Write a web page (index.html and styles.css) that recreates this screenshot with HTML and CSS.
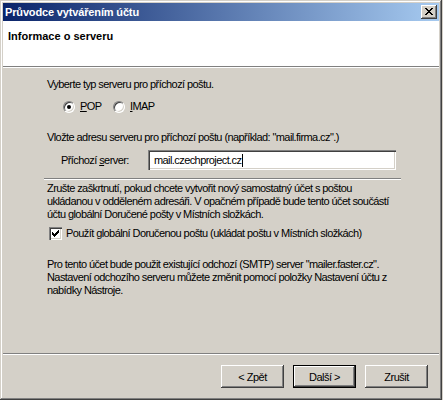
FILE: index.html
```html
<!DOCTYPE html>
<html lang="cs">
<head>
<meta charset="utf-8">
<title>Průvodce vytvářením účtu</title>
<link rel="stylesheet" href="styles.css">
</head>
<body>
<div class="window">
  <div class="titlebar">
    <span class="title">Průvodce vytvářením účtu</span>
    <span class="close">
      <svg width="8" height="7" viewBox="0 0 8 7" shape-rendering="crispEdges">
        <rect x="0" y="0" width="2" height="1"/><rect x="6" y="0" width="2" height="1"/>
        <rect x="1" y="1" width="2" height="1"/><rect x="5" y="1" width="2" height="1"/>
        <rect x="2" y="2" width="4" height="1"/>
        <rect x="3" y="3" width="2" height="1"/>
        <rect x="2" y="4" width="4" height="1"/>
        <rect x="1" y="5" width="2" height="1"/><rect x="5" y="5" width="2" height="1"/>
        <rect x="0" y="6" width="2" height="1"/><rect x="6" y="6" width="2" height="1"/>
      </svg>
    </span>
  </div>
  <div class="header">
    <h1 class="heading">Informace o serveru</h1>
  </div>
  <div class="content">
    <p class="text">Vyberte typ serveru pro příchozí poštu.</p>
    <div class="radios">
      <span class="radio-item pop"><span class="radio checked"></span><span class="text"><u>P</u>OP</span></span>
      <span class="radio-item"><span class="radio"></span><span class="text"><u>I</u>MAP</span></span>
    </div>
    <p class="text gap18">Vložte adresu serveru pro příchozí poštu (například: "mail.firma.cz".)</p>
    <div class="field">
      <span class="field-label text">Příchozí <u>s</u>erver:</span>
      <div class="input text">mail.czechproject.cz<span class="caret"></span></div>
    </div>
    <div class="separator"></div>
    <p class="text para1">Zrušte zaškrtnutí, pokud chcete vytvořit nový samostatný účet s poštou<br>ukládanou v odděleném adresáři. V opačném případě bude tento účet součástí<br>účtu globální Doručené pošty v Místních složkách.</p>
    <div class="check-row">
      <span class="checkbox">
        <svg width="7" height="7" viewBox="0 0 7 7" shape-rendering="crispEdges">
          <rect x="6" y="0" width="1" height="1"/>
          <rect x="5" y="1" width="2" height="1"/>
          <rect x="0" y="2" width="1" height="1"/><rect x="4" y="2" width="3" height="1"/>
          <rect x="0" y="3" width="2" height="1"/><rect x="3" y="3" width="3" height="1"/>
          <rect x="0" y="4" width="5" height="1"/>
          <rect x="1" y="5" width="3" height="1"/>
          <rect x="2" y="6" width="1" height="1"/>
        </svg>
      </span>
      <span class="text">Použít globální Doručenou poštu (ukládat poštu v Místních složkách)</span>
    </div>
    <p class="text gap18">Pro tento účet bude použit existující odchozí (SMTP) server "mailer.faster.cz".<br>Nastavení odchozího serveru můžete změnit pomocí položky Nastavení účtu z<br>nabídky Nástroje.</p>
  </div>
  <div class="footer">
    <button class="btn">&lt; Zpět</button>
    <button class="btn default">Další &gt;</button>
    <button class="btn">Zrušit</button>
  </div>
</div>
</body>
</html>
```
FILE: styles.css
```css
html, body {
  margin: 0;
  padding: 0;
  background: #d4d0c8;
}

body {
  font-family: "Liberation Sans", Arial, sans-serif;
  font-size: 11px;
  color: #000;
}

.window {
  width: 442px;
  height: 400px;
  box-sizing: border-box;
  padding: 3px;
  background: #d4d0c8;
  box-shadow: inset -1px -1px #404040, inset 1px 1px #d4d0c8, inset -2px -2px #808080, inset 2px 2px #ffffff;
  display: flex;
  flex-direction: column;
}

.titlebar {
  height: 18px;
  flex: none;
  background: linear-gradient(to right, #0a246a, #a6caf0);
  display: flex;
  align-items: center;
  justify-content: space-between;
  padding: 0 2px 0 2px;
}

.title {
  color: #fff;
  font-weight: bold;
  line-height: 13px;
  letter-spacing: -0.15px;
}

.close {
  width: 16px;
  height: 14px;
  box-sizing: border-box;
  background: #d4d0c8;
  box-shadow: inset -1px -1px #404040, inset 1px 1px #ffffff, inset -2px -2px #808080;
  display: flex;
  align-items: center;
  justify-content: center;
  padding: 0 1px 1px 0;
}

.close svg { display: block; fill: #000; }

.header {
  height: 45px;
  flex: none;
  background: #fff;
  border-bottom: 1px solid #808080;
}

.heading {
  margin: 0;
  padding: 9px 0 0 5px;
  font-size: 11px;
  font-weight: bold;
  line-height: 13px;
}

.content {
  flex: 1;
  border-top: 1px solid #fff;
  padding: 10px 0 0 44px;
}

.text {
  line-height: 13px;
  letter-spacing: -0.58px;
}

p.text { margin: 0; }

.gap18 { margin-top: 18px !important; }

.radios {
  display: flex;
  align-items: center;
  height: 13px;
  margin: 9px 0 0 16px;
}

.radio-item {
  display: flex;
  align-items: center;
  gap: 5px;
}

.radio-item.pop { width: 50px; }

.radio {
  width: 12px;
  height: 12px;
  box-sizing: border-box;
  border-radius: 50%;
  background: #fff;
  border: 1px solid;
  border-color: #808080 #ffffff #ffffff #808080;
  box-shadow: inset 1px 1px #404040, inset -1px -1px #d4d0c8;
  display: flex;
  align-items: center;
  justify-content: center;
}

.radio.checked::after {
  content: "";
  width: 4px;
  height: 4px;
  border-radius: 50%;
  background: #000;
}

.field {
  display: flex;
  align-items: center;
  margin: 6px 0 0 14px;
}

.field-label { width: 87px; flex: none; }

.input {
  width: 248px;
  height: 20px;
  box-sizing: border-box;
  background: #fff;
  box-shadow: inset 1px 1px #808080, inset 2px 2px #404040, inset -1px -1px #ffffff, inset -2px -2px #d4d0c8;
  padding: 0 0 0 6px;
  display: flex;
  align-items: center;
}

.caret {
  display: inline-block;
  width: 1px;
  height: 13px;
  background: #000;
  margin-left: 1px;
}

.separator {
  width: 357px;
  height: 0;
  margin: 8px 0 0 -3px;
  border-top: 1px solid #808080;
  border-bottom: 1px solid #fff;
}

.para1 { margin-top: 2px !important; }

.check-row {
  display: flex;
  align-items: center;
  gap: 4px;
  margin: 6px 0 0 2px;
  height: 13px;
}

.checkbox {
  width: 13px;
  height: 13px;
  box-sizing: border-box;
  background: #fff;
  box-shadow: inset 1px 1px #808080, inset 2px 2px #404040, inset -1px -1px #ffffff, inset -2px -2px #d4d0c8;
  display: flex;
  align-items: center;
  justify-content: center;
}

.checkbox svg { display: block; fill: #000; }

.footer {
  flex: none;
  border-top: 1px solid #808080;
  box-shadow: inset 0 1px #fff;
  padding: 11px 11px 9px 0;
  display: flex;
  justify-content: flex-end;
  gap: 9px;
}

.btn {
  width: 63px;
  height: 23px;
  box-sizing: border-box;
  border: 0;
  margin: 0;
  padding: 0;
  background: #d4d0c8;
  box-shadow: inset -1px -1px #404040, inset 1px 1px #ffffff, inset -2px -2px #808080;
  font-family: "Liberation Sans", Arial, sans-serif;
  font-size: 11px;
  letter-spacing: -0.5px;
  color: #000;
}

.btn.default {
  border: 1px solid #000;
}
```
